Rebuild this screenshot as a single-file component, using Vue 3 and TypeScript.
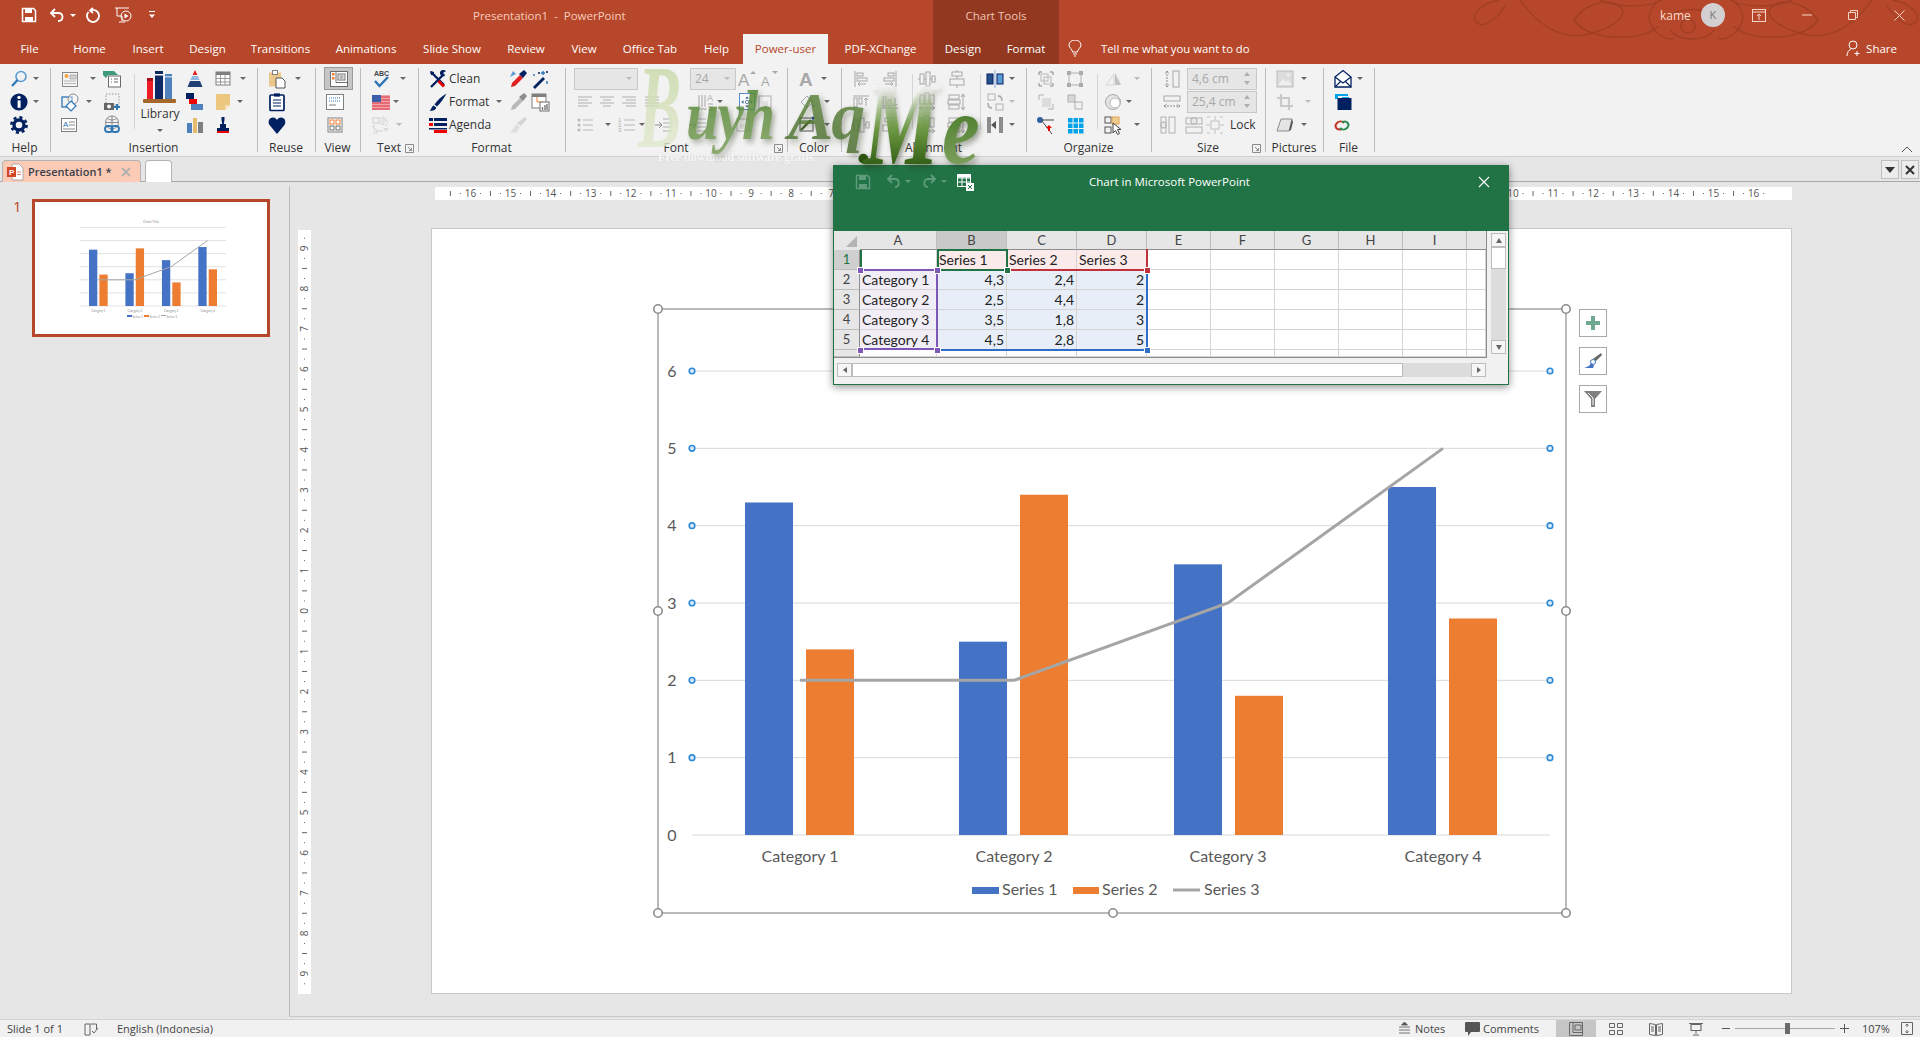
<script setup lang="ts">
interface Cell {
  x: number
  i?: string
  caret?: number
  text?: string
  box?: number
  val?: string
  cls?: string
  spin?: boolean
}
interface Part {
  w: number
  rows?: Cell[][]
  kind?: 'sep' | 'library'
}
interface Group {
  label: string
  w: number
  launcher?: boolean
  parts: Part[]
}

const navy = '#002060'
const lines = (c: string, ys: number[], x1 = 3, x2 = 17) =>
  ys.map((y) => `<path d="M${x1} ${y}H${x2}" stroke="${c}" stroke-width="1"/>`).join('')

// ribbon glyphs, 20x20 box
const icons: Record<string, string> = {
  search: '<circle cx="12" cy="7.5" r="5" fill="none" stroke="#5b9bd5" stroke-width="1.6"/><path d="M8.5 11 3 17" stroke="#2e75b6" stroke-width="2.2"/>',
  info: `<circle cx="10" cy="10" r="8.6" fill="${navy}"/><rect x="8.6" y="8.4" width="3" height="7.4" fill="#fff"/><circle cx="10" cy="5.4" r="1.7" fill="#fff"/>`,
  gear: `<circle cx="10" cy="10" r="5" fill="none" stroke="${navy}" stroke-width="3.4"/><circle cx="10" cy="10" r="7.6" fill="none" stroke="${navy}" stroke-width="2.6" stroke-dasharray="3 3"/>`,
  slideNote: '<rect x="2.5" y="3.5" width="15" height="14" fill="#f4f4f4" stroke="#8a8a8a"/><circle cx="6.5" cy="7" r="2" fill="#f2a53a"/><path d="M10 6h6v4h-6zM4 12h12M4 14.5h12" fill="#d0d0d0" stroke="#a8a8a8" stroke-width=".8"/>',
  sheetGreen: '<path d="M1 2h11l4 4H6l-2 3-3-3z" fill="#3f9a7b"/><rect x="6.5" y="7" width="12" height="11" fill="#fff" stroke="#6a6a6a"/><path d="M9 10h1M12 10h4M9 13h1M12 13h4" stroke="#6a6a6a"/>',
  shapes: '<rect x="2" y="5" width="10" height="10" fill="none" stroke="#2e75b6" stroke-width="1.3"/><circle cx="13" cy="7" r="5" fill="#fff" fill-opacity=".4" stroke="#8a8a8a"/><path d="M11 9l5 5-5 5-5-5z" fill="#fff" stroke="#2e75b6" stroke-width="1.2"/>',
  camera: '<rect x="4" y="2" width="13" height="11" fill="none" stroke="#9a9a9a" stroke-dasharray="1.5 1.5"/><rect x="2" y="11" width="10" height="7" fill="#666"/><circle cx="7" cy="14.5" r="2" fill="#fff"/><path d="M15 12v6M12 15h6" stroke="#2e75b6" stroke-width="2"/>',
  textbox: '<rect x="2.5" y="3.5" width="15" height="13" fill="#fff" stroke="#7f7f7f"/><text x="4" y="12" font-size="8" font-family="Liberation Sans" fill="#2e75b6">A</text><path d="M10 7h6M10 10h6M4 14h12" stroke="#8a8a8a"/>',
  globeLink: '<circle cx="10" cy="7.5" r="6.5" fill="none" stroke="#8a8a8a"/><path d="M3.5 7.5h13M10 1v13M5.5 3.5c3 2 6 2 9 0" fill="none" stroke="#8a8a8a"/><rect x="3" y="11" width="7.5" height="6" rx="3" fill="none" stroke="#2e75b6" stroke-width="1.8"/><rect x="9.5" y="11" width="7.5" height="6" rx="3" fill="none" stroke="#2e75b6" stroke-width="1.8"/>',
  pyramid: '<path d="M10 1l2.4 5H7.6z" fill="#e02020"/><path d="M7.2 7h5.6l1.8 4H5.4z" fill="#8fb7e0"/><path d="M5 12h10l2.5 6h-15z" fill="#1f3f77"/>',
  table: '<rect x="3" y="3" width="14" height="13" fill="#fff" stroke="#7f7f7f"/><rect x="3" y="3" width="14" height="3" fill="#7f7f7f"/><path d="M3 9.5h14M3 13h14M7.5 6v10M12 6v10" stroke="#9a9a9a"/>',
  flowblocks: `<rect x="1" y="1" width="8" height="6" fill="${navy}"/><rect x="4" y="7" width="8" height="5" fill="#f00000"/><rect x="6" y="12" width="12" height="6" fill="#4f81bd"/>`,
  note: '<path d="M3 2h14v11l-5 5H3z" fill="#edc77d"/><path d="M12 18v-5h5z" fill="#f8e3b8"/>',
  barchart: '<rect x="2" y="8" width="5" height="10" fill="#4f81bd"/><rect x="8" y="3" width="4" height="15" fill="#e8bc6e"/><rect x="13" y="7" width="5" height="11" fill="#7f7f7f"/>',
  stamp: `<path d="M8.5 2h3v3l-.7 4h2.2v4H7V9h2.2l-.7-4z" fill="${navy}"/><rect x="4" y="13" width="12" height="3" fill="${navy}"/><rect x="4" y="16" width="12" height="2" fill="#f00000"/>`,
  clipboard: '<rect x="2" y="3.5" width="12" height="14" fill="#edc88c"/><rect x="5.5" y="1.5" width="5" height="4" fill="#fff" stroke="#7f7f7f"/><path d="M9 9h6l3 3v7H9z" fill="#fff" stroke="#555"/>',
  notepad: `<rect x="3" y="3" width="14" height="15.5" rx="1" fill="#fff" stroke="${navy}" stroke-width="1.7"/><rect x="7" y="1.4" width="6" height="3.2" fill="${navy}"/>` + lines(navy, [8, 11, 14], 6, 14),
  heart: `<path d="M10 19 2.5 10C.5 7 2 2.5 6 2.5c2 0 3.2 1.2 4 2.6.8-1.4 2-2.6 4-2.6 4 0 5.5 4.5 3.5 7.5z" fill="${navy}"/>`,
  normalView: '<rect x="1.5" y="2.5" width="17" height="15" fill="#fff" stroke="#6f6f6f"/><path d="M7 2.5v11h11.5" fill="none" stroke="#6f6f6f"/><rect x="3" y="4" width="2.5" height="2.5" fill="#ed7d31"/><rect x="3" y="8" width="2.5" height="2.5" fill="#ed7d31"/><rect x="9" y="5" width="7" height="6" fill="none" stroke="#6f6f6f"/><path d="M10.5 7h4M10.5 9h4" stroke="#6f6f6f"/>',
  dottedView: '<rect x="1.5" y="2.5" width="17" height="15" fill="#fff" stroke="#7f7f7f"/><path d="M4 6h12M4 9h12" stroke="#2e75b6" stroke-dasharray="1 1"/><path d="M4 13h7" stroke="#7f7f7f"/>',
  gridView: '<rect x="3" y="3" width="14" height="14" fill="#fff" stroke="#7f7f7f"/><rect x="5" y="5" width="4" height="4" fill="none" stroke="#ed7d31"/><rect x="11" y="5" width="4" height="4" fill="none" stroke="#ed7d31"/><rect x="5" y="11" width="4" height="4" fill="none" stroke="#6f6f6f"/><rect x="11" y="11" width="4" height="4" fill="none" stroke="#6f6f6f"/>',
  abc: '<text x="3" y="6.5" font-size="7" font-weight="700" font-family="Liberation Sans" fill="#444">ABC</text><path d="M4 12l4.5 5L17 8" fill="none" stroke="#2e75b6" stroke-width="2.5"/>',
  flag: '<rect x="1" y="3" width="18" height="15" fill="#f4a3a8"/><path d="M1 5h18M1 8h18M1 11h18M1 14h18M1 17h18" stroke="#e05a63" stroke-width="1.3"/><rect x="1" y="3" width="9" height="7" fill="#3b5fa8"/>',
  translate: '<path d="M2 3h6v5H2zM4 10l-2 2 2 2M6 16h6" fill="none" stroke="#c8c8c8" stroke-width="1.5"/><text x="8" y="10" font-size="10" font-family="Noto Sans CJK JP" fill="#c0c0c0">あ</text><text x="2" y="19" font-size="9" font-family="Liberation Sans" fill="#c0c0c0">a</text><path d="M12 13h6l-3 4z" fill="#c8c8c8"/>',
  tools: `<path d="M3 18 16 5M3 3l13 13" stroke="${navy}" stroke-width="2.4"/><path d="M2 2l4 1 0 3-3 0zM12 3a4 4 0 0 1 6-1l-3 2 2 3a4 4 0 0 1-5-2z" fill="${navy}"/><path d="M10.5 12 16 17.5" stroke="#e00000" stroke-width="3"/>`,
  brush: `<path d="M18.5 1.5C14 4 9.5 8 6.5 12.5l2.5 2c3.5-3.5 7-8.500 9.500-13z" fill="${navy}"/><path d="M5.5 13.5c-2 1-2 4-4 5 3 .8 6 0 6.8-3z" fill="${navy}"/>`,
  agenda: `<rect x="1" y="3" width="4" height="3" fill="${navy}"/><rect x="6" y="3" width="13" height="3" fill="${navy}"/><rect x="1" y="8" width="4" height="3" fill="#f00000"/><rect x="6" y="8" width="13" height="3" fill="${navy}"/><rect x="1" y="13" width="18" height="1.5" fill="${navy}"/><rect x="6" y="15" width="13" height="3" fill="#f00000"/>`,
  dropper: `<path d="M12 6l3 3-8 8-4 1 1-4z" fill="#e02020"/><path d="M11 5l5-4 3 3-4 5z" fill="${navy}"/><path d="M2 8l3-6 3 3z" fill="#5b9bd5"/>`,
  wand: `<path d="M3 18l10-10 2 2-10 10z" fill="${navy}"/><path d="M13 2v4M11 4h4M4 5v2M17 12v3" stroke="#2e75b6" stroke-width="1.4"/><path d="M8 4h2M16 3h2" stroke="${navy}" stroke-width="1.4"/>`,
  dropperOff: '<path d="M12 6l3 3-8 8-4 1 1-4z" fill="#b8b8b8"/><path d="M11 5l5-4 3 3-4 5z" fill="#8c8c8c"/>',
  tableChart: '<rect x="2" y="2" width="14" height="14" fill="#fff" stroke="#7f7f7f"/><rect x="2" y="2" width="14" height="3" fill="#7f7f7f"/><path d="M7 5v5h6" fill="none" stroke="#ed7d31"/><rect x="10" y="10" width="9" height="9" fill="#fff" stroke="#6f6f6f"/><path d="M12.5 18v-3M15 18v-5M17 18v-6" stroke="#6f6f6f" stroke-width="1.3"/>',
  brushOff: '<path d="M17 2l2 2-6 7-4-3z" fill="#d4d4d4"/><path d="M8 9l4 3-3 5c-2 1-5 1-7 0 2-1 4-4 6-8z" fill="#dedede"/>',
  growA: '<text x="1" y="17" font-size="17" font-family="Liberation Sans" fill="#a8a8a8">A</text><path d="M13 5l3-3 3 3z" fill="#a8a8a8"/>',
  shrinkA: '<text x="2" y="17" font-size="13" font-family="Liberation Sans" fill="#a8a8a8">A</text><path d="M13 2l3 3 3-3z" fill="#a8a8a8"/>',
  alignLeft: lines('#b0b0b0', [5, 8, 11, 14], 3, 17).replace('M3 8H17', 'M3 8H13').replace('M3 14H17', 'M3 14H13'),
  alignMid: lines('#b0b0b0', [5, 8, 11, 14], 3, 17).replace('M3 8H17', 'M6 8H14').replace('M3 14H17', 'M6 14H14'),
  alignRight: lines('#b0b0b0', [5, 8, 11, 14], 3, 17).replace('M3 8H17', 'M7 8H17').replace('M3 14H17', 'M7 14H17'),
  alignFull: lines('#b0b0b0', [5, 8, 11, 14], 3, 17),
  bullets: '<circle cx="4" cy="5" r="1.5" fill="#b8b8b8"/><circle cx="4" cy="10" r="1.5" fill="#b8b8b8"/><circle cx="4" cy="15" r="1.5" fill="#b8b8b8"/>' + lines('#b8b8b8', [5, 10, 15], 8, 18),
  numbers: '<text x="1" y="7" font-size="6" fill="#b0b0b0" font-family="Liberation Sans">1</text><text x="1" y="12" font-size="6" fill="#b0b0b0" font-family="Liberation Sans">2</text><text x="1" y="17" font-size="6" fill="#b0b0b0" font-family="Liberation Sans">3</text>' + lines('#b8b8b8', [5, 10, 15], 7, 18),
  indent: '<path d="M2 10h6M6 7l3 3-3 3" fill="none" stroke="#8c8c8c"/>' + lines('#b0b0b0', [4, 8, 12, 16], 10, 19),
  textDir: '<path d="M4 3v12M7 3v12M10 3v12" stroke="#a8a8a8"/><path d="M2.5 16l1.5 2 1.5-2M5.5 16l1.5 2 1.5-2M8.5 16l1.5 2 1.5-2" fill="none" stroke="#a8a8a8"/><text x="12" y="9" font-size="9" font-family="Liberation Sans" fill="#a8a8a8">A</text><path d="M13 12h5M13 15h5M13 18h5" stroke="#a8a8a8"/>',
  moveHandles: '<path d="M10 2l2.5 3h-5zM10 18l-2.5-3h5zM2 10l3-2.5v5zM18 10l-3 2.5v-5z" fill="#24508c"/><circle cx="10" cy="10" r="2.5" fill="none" stroke="#24508c"/>',
  smallBox: '<rect x="4" y="4" width="12" height="12" fill="none" stroke="#b0b0b0"/><path d="M7 9h6v5H7z" fill="#e0e0e0"/>',
  bigA: '<text x="2" y="17" font-size="19" font-family="Liberation Sans" font-weight="700" fill="#a8a8a8">A</text>',
  fill: '<path d="M4 10l6-6 6 6-6 6z" fill="#f2f2f2" stroke="#a8a8a8"/><path d="M16 11c1 2 2 3 1 5-2 0-2-3-1-5z" fill="#a8a8a8"/>',
  lineColor: '<rect x="3" y="3" width="13" height="13" fill="none" stroke="#555"/><path d="M4 15 14 5" stroke="#4d6b2c" stroke-width="2.4"/><circle cx="16" cy="3" r="1.5" fill="#24508c"/>',
  alignEdgeL: '<path d="M4 2v16" stroke="#a8a8a8"/><rect x="6" y="4" width="6" height="3" fill="none" stroke="#a8a8a8"/><rect x="6" y="9" width="10" height="3" fill="none" stroke="#a8a8a8"/><path d="M7 15h8M7 15l2-2M7 15l2 2" fill="none" stroke="#a8a8a8"/>',
  alignEdgeR: '<path d="M16 2v16" stroke="#a8a8a8"/><rect x="8" y="4" width="6" height="3" fill="none" stroke="#a8a8a8"/><rect x="4" y="9" width="10" height="3" fill="none" stroke="#a8a8a8"/><path d="M13 15H5M13 15l-2-2M13 15l-2 2" fill="none" stroke="#a8a8a8"/>',
  alignTop: '<path d="M2 4h16" stroke="#a8a8a8"/><rect x="3" y="6" width="3" height="9" fill="none" stroke="#a8a8a8"/><rect x="8" y="6" width="3" height="6" fill="none" stroke="#a8a8a8"/><path d="M15 14V6M15 6l-2 2M15 6l2 2" fill="none" stroke="#a8a8a8"/>',
  alignBottom: '<path d="M2 16h16" stroke="#a8a8a8"/><rect x="3" y="5" width="3" height="9" fill="none" stroke="#a8a8a8"/><rect x="8" y="8" width="3" height="6" fill="none" stroke="#a8a8a8"/><path d="M15 6v8M15 14l-2-2M15 14l2-2" fill="none" stroke="#a8a8a8"/>',
  alignMiddleH: '<path d="M1 10h18" stroke="#a8a8a8"/><rect x="3" y="5" width="4" height="10" fill="#f2f2f2" stroke="#a8a8a8"/><rect x="9" y="3" width="4" height="14" fill="#f2f2f2" stroke="#a8a8a8"/><rect x="15" y="7" width="3" height="6" fill="#f2f2f2" stroke="#a8a8a8"/>',
  alignMiddleV: '<path d="M10 1v18" stroke="#a8a8a8"/><rect x="5" y="3" width="10" height="4" fill="#f2f2f2" stroke="#a8a8a8"/><rect x="3" y="10" width="14" height="6" fill="#f2f2f2" stroke="#a8a8a8"/>',
  spreadH: '<rect x="3" y="3" width="4" height="9" fill="none" stroke="#a8a8a8"/><rect x="8" y="1" width="4" height="11" fill="none" stroke="#a8a8a8"/><rect x="13" y="3" width="4" height="9" fill="none" stroke="#a8a8a8"/><path d="M2 16h16M2 16l3-2M2 16l3 2M18 16l-3-2M18 16l-3 2" fill="none" stroke="#a8a8a8"/>',
  spreadV: '<rect x="2" y="3" width="10" height="4" fill="none" stroke="#a8a8a8"/><rect x="1" y="8" width="12" height="4" fill="none" stroke="#a8a8a8"/><rect x="2" y="13" width="10" height="4" fill="none" stroke="#a8a8a8"/><path d="M16 2v16M16 2l-2 3M16 2l2 3M16 18l-2-3M16 18l2-3" fill="none" stroke="#a8a8a8"/>',
  alignBlue: '<path d="M10 1v18" stroke="#8db3e2"/><rect x="2" y="5" width="6" height="10" fill="#24508c" stroke="#002060"/><rect x="12" y="5" width="6" height="10" fill="#5b9bd5" stroke="#002060"/>',
  rotate: '<rect x="3" y="2" width="7" height="6" fill="none" stroke="#7f7f7f"/><rect x="11" y="12" width="7" height="6" fill="none" stroke="#7f7f7f"/><path d="M13 4c3 0 4 2 4 5M7 16c-3 0-4-2-4-5" fill="none" stroke="#7f7f7f" stroke-width="1.8"/>',
  distribute: '<rect x="2" y="2" width="4" height="16" fill="#8c8c8c"/><rect x="14" y="2" width="4" height="16" fill="#8c8c8c"/><path d="M6 10l5-4v8z" fill="#555"/>',
  group: '<path d="M3 3h3M14 3h3M3 17h3M14 17h3M3 3v3M17 3v3M3 14v3M17 14v3" stroke="#a8a8a8" stroke-width="1.5"/><rect x="5" y="5" width="7" height="7" fill="none" stroke="#b8b8b8"/><rect x="8" y="8" width="7" height="7" fill="none" stroke="#b8b8b8"/>',
  ungroup: '<rect x="2" y="2" width="4" height="4" fill="#a8a8a8"/><rect x="14" y="2" width="4" height="4" fill="#a8a8a8"/><rect x="2" y="14" width="4" height="4" fill="#a8a8a8"/><rect x="14" y="14" width="4" height="4" fill="#a8a8a8"/><rect x="4" y="4" width="12" height="12" fill="none" stroke="#b0b0b0"/>',
  front: '<path d="M3 8V3h5M17 12v5h-5" fill="none" stroke="#b0b0b0"/><rect x="6" y="6" width="9" height="9" fill="#dcdcdc"/>',
  back: '<rect x="3" y="3" width="7" height="7" fill="#d8d8d8" stroke="#b0b0b0"/><rect x="10" y="10" width="7" height="7" fill="none" stroke="#b0b0b0"/>',
  flip: '<path d="M3 16 11 5v11z" fill="none" stroke="#bcbcbc"/><path d="M12 4l6 12h-6z" fill="#9c9c9c"/>',
  circles: '<circle cx="10" cy="10" r="7.5" fill="#e4e4e4" stroke="#a8a8a8"/><circle cx="12" cy="11" r="5" fill="#fff" stroke="#b8b8b8"/>',
  needle: '<circle cx="4" cy="5" r="3" fill="#30609f"/><path d="M6 5h12M6 6l10 13" stroke="#444"/><path d="M13 10l-3 3h2v3h2v-3h2z" fill="#f00000"/>',
  dots: [3, 8.5, 14].flatMap((x) => [3, 8.5, 14].map((y) => `<rect x="${x}" y="${y}" width="4.5" height="4.5" fill="#00a2e8"/>`)).join(''),
  selectShape: '<rect x="2" y="2" width="6" height="6" fill="none" stroke="#555"/><rect x="2" y="12" width="6" height="6" fill="none" stroke="#555"/><rect x="9" y="2" width="7" height="7" fill="#f0cb90" stroke="#e0a850"/><path d="M10 8v10l2.5-2.5 2 4 2-1-2-4h3.5z" fill="#fff" stroke="#444"/>',
  heightIc: '<rect x="11" y="2" width="6" height="16" fill="none" stroke="#a8a8a8"/><path d="M5 2v16M5 2 3 5M5 2l2 3M5 18l-2-3M5 18l2-3" fill="none" stroke="#8c8c8c" stroke-dasharray="2 1"/>',
  widthIc: '<rect x="2" y="4" width="16" height="5" fill="none" stroke="#a8a8a8"/><path d="M2 14h16M2 14l3-2M2 14l3 2M18 14l-3-2M18 14l-3 2" fill="none" stroke="#8c8c8c" stroke-dasharray="2 1"/>',
  sizeA: '<rect x="3" y="2" width="5" height="16" fill="none" stroke="#b0b0b0"/><rect x="11" y="2" width="6" height="16" fill="none" stroke="#b0b0b0"/><rect x="3" y="7" width="5" height="6" rx="2" fill="#e8e8e8" stroke="#a8a8a8"/>',
  sizeB: '<rect x="2" y="3" width="16" height="6" fill="none" stroke="#b0b0b0"/><rect x="2" y="12" width="16" height="6" fill="none" stroke="#b0b0b0"/><rect x="7" y="3" width="6" height="6" rx="2" fill="#e8e8e8" stroke="#a8a8a8"/>',
  sizeC: '<rect x="6" y="6" width="8" height="8" fill="none" stroke="#c0c0c0"/><path d="M10 1v4M10 15v4M1 10h4M15 10h4" stroke="#c0c0c0"/><path d="M2 2h3M15 2h3M2 18h3M15 18h3" stroke="#c0c0c0"/>',
  image: '<rect x="2" y="2" width="16" height="16" fill="#dcdcdc" stroke="#bcbcbc"/><path d="M3 16l5-6 3 3 2-2 4 5z" fill="#f0f0f0"/><circle cx="13" cy="6" r="1.5" fill="#f0f0f0"/>',
  crop: '<path d="M6 2v12h12M2 6h12v12" fill="none" stroke="#a8a8a8" stroke-width="2.2"/>',
  eraser: '<path d="M6 4h11l-3 12H2z" fill="#e4e4e4" stroke="#8c8c8c"/><path d="M14 16l3-12 1 3-2 8z" fill="#555"/>',
  mail: `<path d="M2 8 10 1.5 18 8v10H2z" fill="#fff" stroke="${navy}" stroke-width="1.3"/><path d="M2 8l8 6 8-6M2 18l6-6M18 18l-6-6" fill="none" stroke="${navy}" stroke-width="1.1"/>`,
  folder: `<path d="M2 2h13v2H5v3H2z" fill="#00a2e8"/><rect x="4.5" y="6" width="14" height="12" fill="${navy}"/><path d="M9 5h7v1H9z" fill="#00a2e8"/>`,
  chain: '<path d="M9 14c-6 2-8-3-5-6 2-2 5-2 7 0" fill="none" stroke="#c0392b" stroke-width="2"/><path d="M9 7c6-2 8 3 5 6-2 2-5 2-7 0" fill="none" stroke="#2e8b57" stroke-width="2"/>',
}

const groupsRaw: Group[] = [
  { label: 'Help', w: 51, parts: [{ w: 50, rows: [
    [{ x: 19, i: 'search', caret: 36 }],
    [{ x: 19, i: 'info', caret: 36 }],
    [{ x: 19, i: 'gear' }],
  ] }] },
  { label: 'Insertion', w: 207, parts: [
    { w: 83, rows: [
      [{ x: 70, i: 'slideNote', caret: 93 }, { x: 112, i: 'sheetGreen' }],
      [{ x: 70, i: 'shapes', caret: 89 }, { x: 112, i: 'camera' }],
      [{ x: 69, i: 'textbox' }, { x: 112, i: 'globeLink' }],
    ] },
    { w: 1, kind: 'sep' },
    { w: 50, kind: 'library' },
    { w: 72, rows: [
      [{ x: 192, i: 'pyramid' }, { x: 220, i: 'table', caret: 240 }],
      [{ x: 192, i: 'flowblocks' }, { x: 220, i: 'note', caret: 237 }],
      [{ x: 192, i: 'barchart' }, { x: 220, i: 'stamp' }],
    ] },
  ] },
  { label: 'Reuse', w: 58, parts: [{ w: 57, rows: [
    [{ x: 277, i: 'clipboard', caret: 298 }],
    [{ x: 277, i: 'notepad' }],
    [{ x: 277, i: 'heart' }],
  ] }] },
  { label: 'View', w: 45, parts: [{ w: 44, rows: [
    [{ x: 324, box: 29, i: 'normalView', cls: 'active' }],
    [{ x: 335, i: 'dottedView' }],
    [{ x: 335, i: 'gridView' }],
  ] }] },
  { label: 'Text', w: 58, launcher: true, parts: [{ w: 57, rows: [
    [{ x: 381, i: 'abc', caret: 403 }],
    [{ x: 381, i: 'flag', caret: 396 }],
    [{ x: 381, i: 'translate', caret: 399, cls: 'off' }],
  ] }] },
  { label: 'Format', w: 147, parts: [{ w: 146, rows: [
    [{ x: 438, i: 'tools', text: 'Clean' }, { x: 518, i: 'dropper' }, { x: 540, i: 'wand' }],
    [{ x: 438, i: 'brush', text: 'Format', caret: 499 }, { x: 518, i: 'dropperOff' }, { x: 540, i: 'tableChart' }],
    [{ x: 438, i: 'agenda', text: 'Agenda' }, { x: 518, i: 'brushOff' }],
  ] }] },
  { label: 'Font', w: 222, launcher: true, parts: [{ w: 221, rows: [
    [{ x: 574, box: 64, cls: 'combo', val: '', caret: 1 }, { x: 690, box: 46, cls: 'combo', val: '24', caret: 1 }, { x: 747, i: 'growA' }, { x: 769, i: 'shrinkA' }],
    [{ x: 585, i: 'alignLeft' }, { x: 607, i: 'alignMid' }, { x: 629, i: 'alignRight' }, { x: 652, i: 'alignFull' }, { x: 705, i: 'textDir', caret: 720 }, { x: 739, box: 16, i: 'moveHandles', cls: 'sel' }, { x: 765, i: 'smallBox' }],
    [{ x: 585, i: 'bullets', caret: 608 }, { x: 627, i: 'numbers', caret: 642 }, { x: 663, i: 'indent' }, { x: 697, i: 'indent' }, { x: 743, i: 'smallBox' }],
  ] }] },
  { label: 'Color', w: 54, parts: [{ w: 53, rows: [
    [{ x: 807, i: 'bigA', caret: 824 }],
    [{ x: 807, i: 'fill', caret: 827 }],
    [{ x: 807, i: 'lineColor', caret: 827 }],
  ] }] },
  { label: 'Alignment', w: 185, parts: [
    { w: 70, rows: [
      [{ x: 861, i: 'alignEdgeL' }, { x: 890, i: 'alignEdgeR' }],
      [{ x: 861, i: 'alignTop' }, { x: 890, i: 'alignBottom' }],
      [{ x: 861, i: 'alignMiddleH' }, { x: 890, i: 'alignMiddleV' }],
    ] },
    { w: 1, kind: 'sep' },
    { w: 67, rows: [
      [{ x: 927, i: 'alignMiddleH' }, { x: 957, i: 'alignMiddleV' }],
      [{ x: 927, i: 'spreadH' }, { x: 957, i: 'spreadV' }],
      [{ x: 927, i: 'spreadH' }, { x: 957, i: 'spreadV' }],
    ] },
    { w: 1, kind: 'sep' },
    { w: 45, rows: [
      [{ x: 995, i: 'alignBlue', caret: 1012 }],
      [{ x: 995, i: 'rotate', caret: 1012, cls: 'off' }],
      [{ x: 995, i: 'distribute', caret: 1012 }],
    ] },
  ] },
  { label: 'Organize', w: 125, parts: [
    { w: 70, rows: [
      [{ x: 1046, i: 'group' }, { x: 1075, i: 'ungroup' }],
      [{ x: 1046, i: 'front' }, { x: 1075, i: 'back' }],
      [{ x: 1046, i: 'needle' }, { x: 1075, i: 'dots' }],
    ] },
    { w: 1, kind: 'sep' },
    { w: 53, rows: [
      [{ x: 1113, i: 'flip', caret: 1137, cls: 'off' }],
      [{ x: 1113, i: 'circles', caret: 1129 }],
      [{ x: 1113, i: 'selectShape', caret: 1137 }],
    ] },
  ] },
  { label: 'Size', w: 114, launcher: true, parts: [{ w: 113, rows: [
    [{ x: 1172, i: 'heightIc' }, { x: 1187, box: 70, cls: 'combo', val: '4,6 cm', spin: true }],
    [{ x: 1172, i: 'widthIc' }, { x: 1187, box: 70, cls: 'combo', val: '25,4 cm', spin: true }],
    [{ x: 1168, i: 'sizeA' }, { x: 1194, i: 'sizeB' }, { x: 1215, i: 'sizeC' }, { x: 1229, text: 'Lock' }],
  ] }] },
  { label: 'Pictures', w: 58, parts: [{ w: 57, rows: [
    [{ x: 1285, i: 'image', caret: 1304 }],
    [{ x: 1285, i: 'crop', caret: 1308, cls: 'off' }],
    [{ x: 1285, i: 'eraser', caret: 1304 }],
  ] }] },
  { label: 'File', w: 51, parts: [{ w: 50, rows: [
    [{ x: 1343, i: 'mail', caret: 1360 }],
    [{ x: 1343, i: 'folder' }],
    [{ x: 1343, i: 'chain' }],
  ] }] },
]

// turn the icon-centre x values into widths so each row stays in normal flow
function layoutRow(start: number, cells: Cell[]) {
  const lefts = cells.map((c) => (c.box ? c.x : c.i ? c.x - 10 : c.x))
  return {
    pad: lefts[0] - start,
    cells: cells.map((c, n) => {
      const left = lefts[n]
      const next = n < cells.length - 1 ? lefts[n + 1] : undefined
      const width = c.box ?? (next !== undefined ? next - left : undefined)
      const iconEnd = c.i ? c.x + 10 : c.x
      const hasCaret = !!c.caret && !c.box
      return {
        ...c,
        width,
        after: c.box && next !== undefined ? next - left - c.box : 0,
        textW: c.text ? (c.caret ? c.caret - 4 - iconEnd : undefined) : undefined,
        caretGap: hasCaret && !c.text ? c.caret! - 3 - iconEnd : 0,
      }
    }),
  }
}

let cursor = 0
const groups = groupsRaw.map((g) => {
  let at = cursor
  cursor += g.w
  return {
    ...g,
    parts: g.parts.map((p) => {
      const start = at
      at += p.w
      return { ...p, rows: p.rows?.map((r) => layoutRow(start, r)) }
    }),
  }
})

const tabs = [
  { name: 'File', w: 59 }, { name: 'Home', w: 61 }, { name: 'Insert', w: 56 }, { name: 'Design', w: 63 },
  { name: 'Transitions', w: 83 }, { name: 'Animations', w: 88 }, { name: 'Slide Show', w: 84 }, { name: 'Review', w: 64 },
  { name: 'View', w: 52 }, { name: 'Office Tab', w: 80 }, { name: 'Help', w: 53 }, { name: 'Power-user', w: 85, on: true },
  { name: 'PDF-XChange', w: 105 },
]

// chart data
const y = (v: number) => 835 - v * 77.33
const cats = [
  { name: 'Category 1', cx: 800, bx: 745, ox: 806, a: 4.3, b: 2.4, c: 2 },
  { name: 'Category 2', cx: 1014, bx: 959, ox: 1020, a: 2.5, b: 4.4, c: 2 },
  { name: 'Category 3', cx: 1228, bx: 1174, ox: 1235, a: 3.5, b: 1.8, c: 3 },
  { name: 'Category 4', cx: 1443, bx: 1388, ox: 1449, a: 4.5, b: 2.8, c: 5 },
]
const linePts = cats.map((c) => `${c.cx},${y(c.c)}`).join(' ')
const vals = [0, 1, 2, 3, 4, 5, 6]
const handles = [[658, 309], [1113, 309], [1566, 309], [658, 611], [1566, 611], [658, 913], [1113, 913], [1566, 913]]

// thumbnail maps the same chart to 146px wide
const mx = (x: number) => 80 + (x - 692) * 0.17
const my = (v: number) => 306 - v * 13.1
const miniLine = cats.map((c) => `${mx(c.cx)},${my(c.c)}`).join(' ')

// rulers
const rulerNums = Array.from({ length: 33 }, (_, n) => ({ n: Math.abs(n - 16), p: (n - 16) * 40.1 }))
const rulerTicks = Array.from({ length: 132 }, (_, n) => ({ p: (n - 66) * 10.025, half: (n - 66) % 4 !== 0 && (n - 66) % 2 === 0, whole: (n - 66) % 4 === 0 })).filter((t) => !t.whole)
const vNums = Array.from({ length: 19 }, (_, n) => ({ n: Math.abs(n - 9), p: (n - 9) * 40.3 }))
const vTicks = Array.from({ length: 75 }, (_, n) => ({ p: (n - 37) * 10.075, half: (n - 37) % 4 !== 0 && (n - 37) % 2 === 0, whole: (n - 37) % 4 === 0 })).filter((t) => !t.whole)

// sheet
const colHeads = ['A', 'B', 'C', 'D', 'E', 'F', 'G', 'H', 'I']
const sheetRows = [
  ['', 'Series 1', 'Series 2', 'Series 3'],
  ['Category 1', '4,3', '2,4', '2'],
  ['Category 2', '2,5', '4,4', '2'],
  ['Category 3', '3,5', '1,8', '3'],
  ['Category 4', '4,5', '2,8', '5'],
  ['', '', '', ''],
]
function cellCls(r: number, c: number) {
  if (r === 0 && c > 0 && c < 4) return 'pink'
  if (r > 0 && r < 5 && c === 0) return 'lav'
  if (r > 0 && r < 5 && c > 0 && c < 4) return 'blue num'
  return ''
}
</script>

<template>
  <div class="app">
    <header class="titlebar">
      <svg class="swirl" width="460" height="46" viewBox="1460 0 460 46">
        <g fill="none" stroke="#a03f24" stroke-width="1.4">
          <path d="M1500 0c-16 2-30 14-24 22 8 8 22-4 30-18" />
          <path d="M1520 0c14 20 38 42 70 34 28-8 42-22 26-30-14-6-32 2-42 16 16 24 74 20 84 6" />
          <path d="M1660 0c-20 14-8 32 2 36 4 3 8 4 12 2" />
          <path d="M1600 0c18 8 48 8 62 0" />
          <path d="M1892 0c16 2 30 14 24 22-8 8-22-4-30-18" />
          <path d="M1872 0c-14 20-38 42-70 34-28-8-42-22-26-30 14-6 32 2 42 16-16 24-74 20-84 6" />
          <path d="M1732 0c20 14 8 32-2 36-4 3-8 4-12 2" />
          <path d="M1792 0c-18 8-48 8-62 0" />
          <circle cx="1688" cy="26" r="7" />
          <path d="M1670 30c8 12 36 12 44 0M1672 14c8-6 34-6 42 0" />
        </g>
      </svg>
      <div class="title-row">
        <div class="qat">
          <svg class="q-save" width="16" height="16" viewBox="0 0 16 16"><path d="M1.5 1.5h11l2 2v11h-13z" fill="none" stroke="#fff" stroke-width="1.5"/><rect x="4" y="2" width="7" height="4" fill="#fff"/><rect x="4" y="10" width="8" height="4" fill="#fff"/></svg>
          <svg class="q-undo" width="16" height="16" viewBox="0 0 16 16"><path d="M6 2 2 6l4 4M2 6h7c6 0 6 8 0 8" fill="none" stroke="#fff" stroke-width="1.8"/></svg>
          <i class="caret white q-c1"></i>
          <svg class="q-redo" width="16" height="16" viewBox="0 0 16 16"><path d="M8 1l-3 2.5L8 6M5.5 3.5a6 6 0 1 1-2 1.5" fill="none" stroke="#fff" stroke-width="1.8"/></svg>
          <svg class="q-show" width="20" height="18" viewBox="0 0 20 18"><path d="M1 2h14M3 2v8h5M8 10v5M5 16h6" fill="none" stroke="#fff"/><circle cx="12" cy="10" r="5" fill="none" stroke="#fff"/><path d="M10.5 7.5l4 2.5-4 2.5z" fill="#fff"/></svg>
          <svg class="q-more" width="8" height="10" viewBox="0 0 8 10"><path d="M1 1.5h6" stroke="#fff"/><path d="M1 4.5h6L4 8z" fill="#fff"/></svg>
        </div>
        <div class="doc-title">Presentation1&nbsp; -&nbsp; PowerPoint</div>
        <div class="ctx-head">Chart Tools</div>
        <div class="account">
          <span class="user">kame</span>
          <span class="avatar">K</span>
          <svg class="win w-ribbon" width="14" height="13" viewBox="0 0 14 13"><rect x=".5" y=".5" width="13" height="12" fill="none" stroke="#f5d5c8"/><path d="M.5 3h13M7 11V5M5 7l2-2 2 2" fill="none" stroke="#f5d5c8"/></svg>
          <svg class="win w-min" width="10" height="10" viewBox="0 0 10 10"><path d="M0 5h10" stroke="#f5d5c8"/></svg>
          <svg class="win w-max" width="10" height="10" viewBox="0 0 10 10"><path d="M.5 2.5h7v7h-7zM2.5 2.5v-2h7v7h-2" fill="none" stroke="#f5d5c8"/></svg>
          <svg class="win w-close" width="11" height="11" viewBox="0 0 11 11"><path d="M.5.5l10 10M10.5.5l-10 10" stroke="#f5d5c8"/></svg>
        </div>
      </div>
      <nav class="tab-row">
        <span v-for="t in tabs" :key="t.name" class="rtab" :class="{ on: t.on }" :style="{ width: t.w + 'px' }">{{ t.name }}</span>
        <div class="ctx-tabs">
          <span class="rtab ctx-a">Design</span>
          <span class="rtab ctx-b">Format</span>
        </div>
        <svg class="bulb" width="14" height="17" viewBox="0 0 14 17"><path d="M4.5 12c0-3-3.5-4-3.5-7a6 5 0 0 1 12 0c0 3-3.5 4-3.5 7zM5 14h4M6 16h2" fill="none" stroke="#fff"/></svg>
        <span class="tell">Tell me what you want to do</span>
        <span class="share">
          <svg width="16" height="17" viewBox="0 0 16 17"><circle cx="7" cy="5" r="4" fill="none" stroke="#fff"/><path d="M1 16c0-4 2-6 4-7M11 11v5M8.5 13.5h5" fill="none" stroke="#fff"/></svg>
          Share
        </span>
      </nav>
    </header>

    <section class="ribbon">
      <div v-for="g in groups" :key="g.label" class="group" :style="{ width: g.w + 'px' }">
        <div class="parts">
          <template v-for="(p, pi) in g.parts" :key="pi">
            <div v-if="p.kind === 'sep'" class="vsep"></div>
            <div v-else-if="p.kind === 'library'" class="library" :style="{ width: p.w + 'px' }">
              <svg width="34" height="34" viewBox="0 0 34 34">
                <rect x="4" y="8" width="6" height="22" fill="#ee1c25"/><rect x="4" y="8" width="6" height="3" fill="#a31218"/>
                <rect x="12" y="1" width="8" height="29" fill="#0e2a64"/><rect x="12" y="4" width="8" height="1.5" fill="#fff"/>
                <rect x="22" y="4" width="7" height="26" fill="#4f81bd"/><rect x="22" y="6" width="7" height="1.5" fill="#b7cfe9"/>
                <rect x="0" y="29" width="33" height="4" rx="1" fill="#a5682a"/>
              </svg>
              <span>Library</span>
              <i class="caret"></i>
            </div>
            <div v-else class="part" :style="{ width: p.w + 'px' }">
              <div v-for="(row, ri) in p.rows" :key="ri" class="row" :style="{ paddingLeft: row.pad + 'px' }">
                <div
                  v-for="(c, ci) in row.cells"
                  :key="ci"
                  class="cell"
                  :class="c.cls"
                  :style="{ width: c.width ? c.width + 'px' : undefined, marginRight: c.after ? c.after + 'px' : undefined }"
                >
                  <svg v-if="c.i" width="20" height="20" viewBox="0 0 20 20" v-html="icons[c.i]"></svg>
                  <span v-if="c.val !== undefined" class="val">{{ c.val }}</span>
                  <span v-if="c.text" class="ctext" :style="{ width: c.textW ? c.textW + 'px' : undefined }">{{ c.text }}</span>
                  <i v-if="c.caret" class="caret" :class="{ end: c.box }" :style="{ marginLeft: c.caretGap ? c.caretGap + 'px' : undefined }"></i>
                  <span v-if="c.spin" class="spin"><i></i><i></i></span>
                </div>
              </div>
            </div>
          </template>
        </div>
        <div class="glabel">{{ g.label }}</div>
        <svg v-if="g.launcher" class="launcher" width="9" height="9" viewBox="0 0 9 9"><path d="M.5 8.5v-8h8v8zM3 3l3.5 3.5M6.5 4v2.5H4" fill="none" stroke="#8c8c8c"/></svg>
      </div>
      <svg class="collapse" width="12" height="7" viewBox="0 0 12 7"><path d="M1 6l5-5 5 5" fill="none" stroke="#555"/></svg>
    </section>

    <div class="docstrip">
      <div class="doctab">
        <svg width="18" height="18" viewBox="0 0 18 18"><path d="M6 1h7l4 4v12H6z" fill="#fff" stroke="#a8a8a8"/><rect x="1" y="4" width="9" height="10" fill="#d24726"/><text x="3" y="12" font-size="8" font-weight="700" font-family="Liberation Sans" fill="#fff">P</text><path d="M11 9h4M11 11.5h4" stroke="#e0846a"/></svg>
        <span class="doctab-name">Presentation1 *</span>
        <svg class="tabx" width="10" height="10" viewBox="0 0 10 10"><path d="M1 1l8 8M9 1 1 9" stroke="#b0b0b0" stroke-width="1.8"/></svg>
      </div>
      <div class="doctab blank"></div>
      <div class="strip-btns">
        <span class="sbtn"><i class="caret dark"></i></span>
        <span class="sbtn"><svg width="10" height="10" viewBox="0 0 10 10"><path d="M1 1l8 8M9 1 1 9" stroke="#333" stroke-width="2"/></svg></span>
      </div>
    </div>

    <main class="workspace">
      <aside class="thumbs">
        <span class="thumb-no">1</span>
        <div class="thumb">
          <svg width="232" height="132" viewBox="35 202 232 132">
            <text x="151" y="223" text-anchor="middle" font-size="3.5" fill="#8c8c8c" font-family="Lato">Chart Title</text>
            <path v-for="v in vals" :key="v" :d="`M80 ${my(v)}H226`" stroke="#e2e2e2" stroke-width="1"/>
            <template v-for="c in cats" :key="c.name">
              <rect :x="mx(c.bx)" :y="my(c.a)" width="8.3" :height="c.a * 13.1" fill="#4472c4"/>
              <rect :x="mx(c.ox)" :y="my(c.b)" width="8.3" :height="c.b * 13.1" fill="#ed7d31"/>
              <text :x="mx(c.cx)" y="312" text-anchor="middle" font-size="3" fill="#8c8c8c" font-family="Lato">{{ c.name }}</text>
            </template>
            <polyline :points="miniLine" fill="none" stroke="#a5a5a5" stroke-width="1"/>
            <rect x="127" y="315" width="5" height="2" fill="#4472c4"/><text x="132.5" y="317.5" font-size="3" fill="#8c8c8c" font-family="Lato">Series 1</text>
            <rect x="144" y="315" width="5" height="2" fill="#ed7d31"/><text x="149.5" y="317.5" font-size="3" fill="#8c8c8c" font-family="Lato">Series 2</text>
            <rect x="161" y="315" width="5" height="1" fill="#a5a5a5"/><text x="166.5" y="317.5" font-size="3" fill="#8c8c8c" font-family="Lato">Series 3</text>
          </svg>
        </div>
      </aside>
      <div class="editor">
        <div class="hruler">
          <svg width="1357" height="13" viewBox="435 0 1357 13">
            <g v-for="t in rulerTicks" :key="t.p" :transform="`translate(${1112 + t.p} 6.5)`">
              <path :d="t.half ? 'M0 -2.5V2.5' : 'M0 -.5V.5'" stroke="#666"/>
            </g>
            <text v-for="t in rulerNums" :key="t.p" :x="1112 + t.p" y="10" text-anchor="middle" font-size="10" fill="#555" font-family="Open Sans">{{ t.n }}</text>
          </svg>
        </div>
        <div class="vruler">
          <svg width="13" height="765" viewBox="0 230 13 765">
            <g v-for="t in vTicks" :key="t.p" :transform="`translate(6.5 ${611 + t.p})`">
              <path :d="t.half ? 'M-2.5 0H2.5' : 'M-.5 0H.5'" stroke="#666"/>
            </g>
            <text v-for="t in vNums" :key="t.p" :transform="`translate(10 ${611 + t.p}) rotate(-90)`" text-anchor="middle" font-size="10" fill="#555" font-family="Open Sans">{{ t.n }}</text>
          </svg>
        </div>
        <div class="slide">
          <svg class="chart" width="908" height="604" viewBox="658 309 908 604">
            <path v-for="v in vals" :key="v" :d="`M692 ${y(v)}H1550`" stroke="#d9d9d9" stroke-width="1"/>
            <text v-for="v in vals" :key="'l' + v" x="672" :y="y(v) + 5.5" class="ct" text-anchor="middle">{{ v }}</text>
            <template v-for="c in cats" :key="c.name">
              <rect :x="c.bx" :y="y(c.a)" width="48" :height="c.a * 77.33" fill="#4472c4"/>
              <rect :x="c.ox" :y="y(c.b)" width="48" :height="c.b * 77.33" fill="#ed7d31"/>
              <text :x="c.cx" y="862" class="ct" text-anchor="middle">{{ c.name }}</text>
            </template>
            <polyline :points="linePts" fill="none" stroke="#a5a5a5" stroke-width="3"/>
            <rect x="972" y="887" width="27" height="7" fill="#4472c4"/><text x="1002" y="895" class="ct">Series 1</text>
            <rect x="1073" y="887" width="26" height="7" fill="#ed7d31"/><text x="1102" y="895" class="ct">Series 2</text>
            <path d="M1173 890h27" stroke="#a5a5a5" stroke-width="3"/><text x="1204" y="895" class="ct">Series 3</text>
            <template v-for="v in vals.slice(1)" :key="'d' + v">
              <circle cx="692" :cy="y(v)" r="2.8" fill="#dceaf7" stroke="#2e8bd8" stroke-width="1.6"/>
              <circle cx="1550" :cy="y(v)" r="2.8" fill="#dceaf7" stroke="#2e8bd8" stroke-width="1.6"/>
            </template>
            <rect x="658" y="309" width="908" height="604" fill="none" stroke="#8c8c8c" stroke-width="1.2"/>
            <circle v-for="(h, n) in handles" :key="n" :cx="h[0]" :cy="h[1]" r="4.2" fill="#fff" stroke="#8c8c8c" stroke-width="1.6"/>
          </svg>
          <div class="chart-btns">
            <span class="cbtn"><svg width="18" height="18" viewBox="0 0 18 18"><path d="M9 2v14M2 9h14" stroke="#6fa88e" stroke-width="4"/></svg></span>
            <span class="cbtn"><svg width="20" height="20" viewBox="0 0 20 20"><path d="M18 2l1 2-6 6-3-2z" fill="#666"/><circle cx="10" cy="11" r="2.5" fill="#fff" stroke="#4472c4"/><path d="M8 12c-1 3-4 4-7 5h9c1-1 1-3 0-4z" fill="#4472c4"/></svg></span>
            <span class="cbtn"><svg width="20" height="20" viewBox="0 0 20 20"><path d="M1 2h18l-7 8v8H8v-8z" fill="#7f7f7f"/><path d="M5 4l5 5v7" fill="none" stroke="#fff"/></svg></span>
          </div>
        </div>
      </div>
    </main>

    <footer class="statusbar">
      <span class="st-slide">Slide 1 of 1</span>
      <svg class="st-spell" width="14" height="14" viewBox="0 0 14 14"><path d="M1 2h5v11H1zM6.5 2h6v5M8 9l2 2 4-5" fill="none" stroke="#666"/></svg>
      <span class="st-lang">English (Indonesia)</span>
      <span class="st-right">
        <svg class="st-notes" width="11" height="13" viewBox="0 0 11 13"><path d="M5.5 0l3 3h-6zM0 5h11M0 8h11M0 11h11" fill="#555" stroke="#555" stroke-width=".8"/></svg>
        <span class="st-t1">Notes</span>
        <svg class="st-com" width="15" height="14" viewBox="0 0 15 14"><path d="M1 0h13a1 1 0 0 1 1 1v8a1 1 0 0 1-1 1H6l-3 4v-4H1a1 1 0 0 1-1-1V1a1 1 0 0 1 1-1z" fill="#555"/></svg>
        <span class="st-t2">Comments</span>
        <span class="st-view on"><svg width="14" height="14" viewBox="0 0 14 14"><path d="M.5.5h13v13H.5zM4 .5v10h9.5M6 3h6v5H6z" fill="none" stroke="#666"/></svg></span>
        <span class="st-view"><svg width="14" height="14" viewBox="0 0 14 14"><path d="M.5 1.5h5v4h-5zM8.5 1.5h5v4h-5zM.5 8.5h5v4h-5zM8.5 8.5h5v4h-5z" fill="none" stroke="#666"/></svg></span>
        <span class="st-view"><svg width="14" height="14" viewBox="0 0 14 14"><path d="M.5 1.5l6 1v11l-6-1zM13.5 1.5l-6 1v11l6-1zM2 5h3M2 7h3M2 9h3M9 5h3M9 7h3M9 9h3" fill="none" stroke="#666"/></svg></span>
        <span class="st-view"><svg width="14" height="14" viewBox="0 0 14 14"><path d="M0 1.5h14M2 2.5h10v6H2zM7 8.5v3M4 13h6" fill="none" stroke="#666" stroke-width="1.1"/></svg></span>
        <span class="zoom-minus"></span>
        <span class="zoom-track"><i></i></span>
        <span class="zoom-plus"></span>
        <span class="st-zoom">107%</span>
        <svg class="st-fit" width="12" height="13" viewBox="0 0 12 13"><path d="M.5.5h11v12H.5zM6 2v3M4.5 3.5L6 2l1.5 1.5M6 11V8M4.5 9.5L6 11l1.5-1.5" fill="none" stroke="#666"/></svg>
      </span>
    </footer>

    <div class="sheet-win">
      <div class="sw-head">
        <svg class="sw-save" width="16" height="16" viewBox="0 0 16 16"><path d="M1.5 1.5h11l2 2v11h-13z" fill="none" stroke="#5f9c7b" stroke-width="1.5"/><rect x="4" y="2" width="7" height="4" fill="#5f9c7b"/><rect x="4" y="10" width="8" height="4" fill="#5f9c7b"/></svg>
        <svg class="sw-undo" width="15" height="14" viewBox="0 0 15 14"><path d="M6 1 2 5l4 4M2 5h7c5 0 5 8 0 8" fill="none" stroke="#5f9c7b" stroke-width="1.8"/></svg>
        <i class="caret sw-c"></i>
        <svg class="sw-redo" width="15" height="14" viewBox="0 0 15 14"><path d="M9 1l4 4-4 4M13 5H6c-5 0-5 8 0 8" fill="none" stroke="#5f9c7b" stroke-width="1.8"/></svg>
        <i class="caret sw-c"></i>
        <svg class="sw-table" width="17" height="17" viewBox="0 0 17 17"><path d="M.5.5h13v12H.5zM.5 4h13M.5 8h13M5 .5v12M9.5.5v12" fill="none" stroke="#fff"/><rect x=".5" y=".5" width="13" height="3" fill="#fff"/><rect x="9" y="9" width="8" height="8" fill="#fff"/><path d="M11 11l4 4M15 11l-4 4" stroke="#217346"/></svg>
        <span class="sw-title">Chart in Microsoft PowerPoint</span>
        <svg class="sw-close" width="12" height="12" viewBox="0 0 12 12"><path d="M1 1l10 10M11 1 1 11" stroke="#fff" stroke-width="1.1"/></svg>
      </div>
      <div class="sw-body">
        <div class="sheet">
          <span class="corner"><i></i></span>
          <span v-for="(h, n) in colHeads" :key="h" class="chead" :class="{ hi: n === 1 }">{{ h }}</span>
          <span class="chead rest"></span>
          <template v-for="(r, ri) in sheetRows" :key="ri">
            <span class="rhead" :class="{ hi: ri === 0 }">{{ ri < 5 ? ri + 1 : '' }}</span>
            <span v-for="(v, ci) in r" :key="ci" class="scell" :class="cellCls(ri, ci)">{{ v }}</span>
            <span v-for="n in 6" :key="'e' + n" class="scell"></span>
          </template>
          <i class="rng purple"></i>
          <i class="rng green"></i>
          <i class="rng red"></i>
          <i class="rng blue"></i>
          <i class="active-a1"></i>
          <b class="dot d-a-top"></b>
          <b class="dot d-b-top"></b>
          <b class="dot d-c-top"></b>
          <b class="dot d-d-top"></b>
          <b class="dot d-a-bot"></b>
          <b class="dot d-b-bot"></b>
          <b class="dot d-d-bot"></b>
        </div>
        <div class="vscroll">
          <span class="sb-btn"><i class="tri up"></i></span>
          <span class="vthumb"></span>
          <span class="vtrack"></span>
          <span class="sb-btn"><i class="tri down"></i></span>
        </div>
      </div>
      <div class="hscroll">
        <span class="sb-btn"><i class="tri left"></i></span>
        <span class="hthumb"></span>
        <span class="htrack"></span>
        <span class="sb-btn"><i class="tri right"></i></span>
      </div>
    </div>

    <div class="watermark">
      <div class="wm-text"><span class="w-b">B</span><span class="w-u">uyh</span><span class="w-a">Aq</span><span class="w-d">.</span><span class="w-m">M</span><span class="w-e">e</span></div>
      <div class="wm-sub">Free download software gratis</div>
    </div>
  </div>
</template>

<style>
html, body { margin: 0; background: #e6e6e6; overflow: hidden; }
</style>

<style scoped>
.app {
  position: relative;
  width: 1920px;
  height: 1037px;
  display: flex;
  flex-direction: column;
  overflow: hidden;
  background: #e6e6e6;
  font-family: "Open Sans", "Noto Sans", sans-serif;
  font-size: 11.5px;
  color: #444;
}

/* title bar */
.titlebar { position: relative; height: 64px; background: #b7472a; color: #fff; flex: none; }
.swirl { position: absolute; left: 1460px; top: 0; }
.title-row { position: relative; display: flex; height: 34px; }
.qat { width: 473px; display: flex; align-items: center; padding-bottom: 2px; box-sizing: border-box; height: 32px; }
.q-save { margin-left: 21px; }
.q-undo { margin-left: 12px; }
.q-c1 { margin-left: 5px; }
.q-redo { margin-left: 9px; }
.q-show { margin-left: 13px; }
.q-more { margin-left: 14px; }
.doc-title { width: 460px; line-height: 32px; color: #f6cdbd; }
.ctx-head { width: 126px; height: 34px; background: #923821; color: #f0c4b2; text-align: center; line-height: 32px; }
.account { flex: 1; display: flex; align-items: center; height: 30px; color: #f8d9cd; }
.user { margin-left: 601px; font-size: 12px; }
.avatar { margin-left: 10px; width: 24px; height: 24px; border-radius: 50%; background: #d2d0d0; color: #777; text-align: center; line-height: 24px; font-size: 11px; }
.win { flex: none; }
.w-ribbon { margin-left: 27px; }
.w-min { margin-left: 36px; }
.w-max { margin-left: 36px; }
.w-close { margin-left: 36px; }
.tab-row { position: relative; display: flex; align-items: stretch; height: 30px; }
.rtab { flex: none; text-align: center; line-height: 30px; }
.rtab.on { background: #f2f2f2; color: #b7472a; }
.ctx-tabs { display: flex; background: #923821; width: 126px; }
.ctx-a { width: 60px; }
.ctx-b { width: 66px; }
.bulb { margin: 6px 0 0 9px; }
.tell { margin-left: 19px; line-height: 30px; font-size: 11.3px; }
.share { margin-left: auto; margin-right: 23px; display: flex; align-items: center; gap: 4px; padding-bottom: 1px; }

/* ribbon */
.ribbon { position: relative; flex: none; height: 93px; box-sizing: border-box; background: #f2f2f2; border-bottom: 1px solid #d0d0d0; display: flex; padding-top: 4px; }
.group { position: relative; height: 84px; box-sizing: border-box; border-right: 1px solid #bdbdbd; flex: none; }
.parts { display: flex; height: 68px; margin-top: -1px; }
.part { flex: none; }
.vsep { flex: none; width: 1px; height: 55px; margin-top: 7px; background: #d4d4d4; }
.row { display: flex; height: 23px; align-items: center; }
.cell { display: flex; align-items: center; flex: none; }
.cell > svg { flex: none; }
.cell.off > svg { opacity: .55; }
.cell.off .caret { border-top-color: #bbb; }
.cell.active { height: 23px; justify-content: center; background: #c6c6c6; box-shadow: inset 0 0 0 1px #9a9a9a; }
.cell.combo { height: 22px; box-sizing: border-box; background: #e6e6e6; border: 1px solid #c8c8c8; color: #a8a8a8; padding: 0 4px; font-size: 12px; }
.cell.sel { height: 17px; justify-content: center; background: #fff; box-shadow: inset 0 0 0 1px #5b8bd0; }
.cell.sel > svg { width: 14px; height: 14px; }
.val { flex: 1; }
.ctext { margin-left: 1px; flex: none; font-size: 12px; color: #333; }
.spin { display: flex; flex-direction: column; gap: 5px; margin-right: 2px; }
.spin i { width: 0; height: 0; border: 3px solid transparent; border-top: 0; border-bottom: 4px solid #b0b0b0; }
.spin i + i { border-bottom: 0; border-top: 4px solid #b0b0b0; }
.caret { display: inline-block; width: 0; height: 0; flex: none; border: 3px solid transparent; border-bottom: 0; border-top: 3.5px solid #666; }
.caret.end { margin-left: auto; margin-right: 1px; border-top-color: #bbb; }
.caret.white { border-top-color: #fff; }
.caret.dark { border: 5px solid transparent; border-bottom: 0; border-top: 6px solid #333; }
.library { flex: none; display: flex; flex-direction: column; align-items: center; box-sizing: border-box; padding-top: 3px; }
.library span { font-size: 12px; color: #333; line-height: 16px; margin-top: 2px; }
.library .caret { margin-top: 7px; }
.glabel { height: 16px; line-height: 26px; text-align: center; color: #333; padding-right: 1px; font-size: 12px; }
.launcher { position: absolute; right: 4px; bottom: -1px; }
.collapse { position: absolute; right: 7px; bottom: 3px; }

/* doc tab strip */
.docstrip { flex: none; height: 25px; box-sizing: border-box; display: flex; align-items: flex-end; padding-left: 2px; gap: 4px; border-bottom: 1px solid #a8a8a8; background: #e6e6e6; position: relative; }
.doctab { width: 139px; height: 22px; box-sizing: border-box; background: #fbcbb5; border: 1px solid #b4b4b4; border-bottom: 0; border-radius: 4px 4px 0 0; display: flex; align-items: center; padding-left: 3px; gap: 4px; margin-bottom: -1px; }
.doctab-name { white-space: nowrap; font-weight: 600; font-size: 11px; color: #3a3f4d; }
.doctab .tabx { margin-left: auto; margin-right: 9px; }
.doctab.blank { width: 27px; background: #fff; }
.strip-btns { position: absolute; right: 1px; top: 3px; display: flex; gap: 2px; }
.sbtn { width: 18px; height: 19px; box-sizing: border-box; background: #ececec; border: 1px solid #c0c0c0; display: flex; align-items: center; justify-content: center; }

/* workspace */
.workspace { flex: 1; display: flex; min-height: 0; }
.thumbs { flex: none; width: 290px; box-sizing: border-box; display: flex; align-items: flex-start; padding: 13px 0 0 13px; border-right: 1px solid #bdbdbd; margin-top: 4px; margin-bottom: 2px; }
.thumb-no { width: 19px; color: #b7472a; font-size: 15px; line-height: 15px; }
.thumb { width: 238px; height: 138px; box-sizing: border-box; border: 3px solid #b7472a; background: #fff; }
.thumb svg { display: block; }
.editor { flex: 1; display: grid; grid-template-columns: 13px 1361px; column-gap: 120px; grid-template-rows: 13px 766px; row-gap: 28px; padding: 5px 0 0 8px; margin-bottom: 2px; border-bottom: 1px solid #c8c8c8; align-content: start; }
.hruler { grid-column: 2; grid-row: 1; margin-left: 4px; background: #fff; height: 13px; width: 1357px; }
.hruler svg, .vruler svg { display: block; }
.vruler { grid-column: 1; grid-row: 2; margin-top: 2px; height: 764px; background: #fff; overflow: hidden; }
.slide { grid-column: 2; grid-row: 2; position: relative; background: #fff; box-shadow: inset 0 0 0 1px #c9c9c9; }
.chart { position: absolute; left: 227px; top: 81px; overflow: visible; }
.ct { font-family: Lato, "Open Sans", sans-serif; font-size: 16px; fill: #595959; }
.chart-btns { position: absolute; left: 1148px; top: 81px; display: flex; flex-direction: column; gap: 10px; }
.cbtn { width: 28px; height: 28px; box-sizing: border-box; background: #fff; border: 1.5px solid #a8a8a8; display: flex; align-items: center; justify-content: center; }

/* status bar */
.statusbar { flex: none; height: 18px; background: #f1f1f1; display: flex; align-items: center; font-size: 11px; color: #444; border-top: 1px solid #d4d4d4; box-sizing: border-box; }
.st-slide { margin-left: 7px; width: 62px; }
.st-spell { margin-left: 15px; }
.st-lang { margin-left: 19px; }
.st-right { margin-left: auto; display: flex; align-items: center; height: 100%; }
.st-t1 { margin-left: 5px; width: 50px; }
.st-com { margin-right: 3px; }
.st-t2 { width: 73px; }
.st-view { width: 40px; height: 100%; display: flex; align-items: center; justify-content: center; }
.st-view.on { background: #c6c6c6; }
.zoom-minus { width: 8px; height: 1px; background: #555; margin-left: 6px; }
.zoom-track { position: relative; width: 100px; height: 1px; background: #a8a8a8; margin-left: 5px; display: block; }
.zoom-track i { position: absolute; left: 50px; top: -5px; width: 5px; height: 11px; background: #6a6a6a; }
.zoom-plus { position: relative; width: 9px; height: 1px; background: #555; margin-left: 5px; }
.zoom-plus::after { content: ""; position: absolute; left: 4px; top: -4px; width: 1px; height: 9px; background: #555; }
.st-zoom { margin-left: 13px; width: 30px; }
.st-fit { margin: 0 7px 0 9px; }

/* excel window */
.sheet-win { position: absolute; left: 833px; top: 165px; width: 676px; height: 220px; box-sizing: border-box; background: #f1f1f1; border: 1px solid #217346; box-shadow: 0 2px 8px rgba(0, 0, 0, .45); font-family: Lato, "Open Sans", sans-serif; z-index: 5; display: flex; flex-direction: column; }
.sw-head { flex: none; height: 65px; background: #217346; color: #fff; display: flex; align-items: flex-start; padding-top: 8px; box-sizing: border-box; font-family: "Open Sans", sans-serif; font-size: 11.5px; }
.sw-save { margin-left: 21px; }
.sw-undo { margin-left: 15px; }
.sw-c { margin: 6px 0 0 4px; border-top-color: #5f9c7b; }
.sw-redo { margin-left: 11px; }
.sw-table { margin-left: 10px; }
.sw-title { margin-left: 115px; line-height: 15px; }
.sw-close { margin-left: auto; margin-right: 18px; margin-top: 2px; }
.sw-body { display: flex; flex: none; }
.sheet { position: relative; display: grid; grid-template-columns: 26px 77px 70px 70px 70px 64px 64px 64px 64px 64px 19px; grid-template-rows: 19px 20px 20px 20px 20px 20px 7px; width: 652px; font-size: 14px; color: #222; border-right: 1px solid #8c8c8c; border-bottom: 1px solid #8c8c8c; }
.corner { background: #e6e6e6; position: relative; }
.corner i { position: absolute; right: 3px; bottom: 3px; width: 0; height: 0; border-left: 11px solid transparent; border-bottom: 11px solid #b4b4b4; }
.chead { background: #e6e6e6; border-right: 1px solid #bdbdbd; border-bottom: 1px solid #8c8c8c; box-sizing: border-box; text-align: center; line-height: 18px; font-size: 13px; color: #444; }
.chead.hi { background: #c9c9c9; border-bottom-color: #217346; }
.chead.rest { border-right: 0; }
.rhead { background: #e6e6e6; border-bottom: 1px solid #bdbdbd; border-right: 1px solid #8c8c8c; box-sizing: border-box; text-align: center; line-height: 19px; font-size: 13px; color: #444; }
.rhead.hi { background: #cfcfcf; color: #217346; }
.scell { background: #fff; border-right: 1px solid #d4d4d4; border-bottom: 1px solid #d4d4d4; box-sizing: border-box; padding: 0 2px; line-height: 19px; white-space: nowrap; overflow: hidden; }
.scell.pink { background: #faeaea; }
.scell.lav { background: #f1edf7; }
.scell.blue { background: #e7eef8; }
.scell.num { text-align: right; }
.rng { position: absolute; box-sizing: border-box; pointer-events: none; }
.rng.purple { left: 26px; top: 38px; width: 78px; height: 81px; border: 2px solid #7e57b8; border-left: 0; }
.rng.green { left: 103px; top: 18px; width: 71px; height: 22px; border: 2px solid #217346; }
.rng.red { left: 173px; top: 37px; width: 141px; height: 3px; border-bottom: 2px solid #c0313c; }
.rng.red::after { content: ""; position: absolute; right: 0; top: -19px; width: 2px; height: 20px; background: #c0313c; }
.rng.blue { left: 103px; top: 39px; width: 211px; height: 81px; border-right: 2px solid #2f6ec7; border-bottom: 2px solid #2f6ec7; }
.active-a1 { position: absolute; left: 26px; top: 19px; width: 2px; height: 20px; background: #217346; }
.dot { position: absolute; width: 5px; height: 5px; box-shadow: 0 0 0 1px #fff; }
.d-a-top { left: 24px; top: 37px; background: #7e57b8; }
.d-b-top { left: 101px; top: 37px; background: #7e57b8; }
.d-c-top { left: 171px; top: 37px; background: #217346; }
.d-d-top { left: 311px; top: 37px; background: #c0313c; }
.d-a-bot { left: 24px; top: 117px; background: #7e57b8; }
.d-b-bot { left: 101px; top: 117px; background: #7e57b8; }
.d-d-bot { left: 311px; top: 117px; background: #2f6ec7; }
.vscroll { display: flex; flex-direction: column; width: 15px; margin: 2px 0 0 4px; height: 121px; }
.vthumb { height: 22px; background: #fff; border: 1px solid #bdbdbd; box-sizing: border-box; }
.vtrack { flex: 1; background: #dcdcdc; }
.sb-btn { flex: none; width: 15px; height: 14px; box-sizing: border-box; background: #f6f6f6; border: 1px solid #bdbdbd; display: flex; align-items: center; justify-content: center; }
.tri { width: 0; height: 0; border: 3.5px solid transparent; }
.tri.up { border-top: 0; border-bottom: 5px solid #666; }
.tri.down { border-bottom: 0; border-top: 5px solid #666; }
.tri.left { border-left: 0; border-right: 4px solid #666; }
.tri.right { border-right: 0; border-left: 4px solid #666; }
.hscroll { display: flex; height: 14px; margin: 5px 0 0 3px; width: 649px; }
.hthumb { width: 551px; background: #fff; border: 1px solid #bdbdbd; box-sizing: border-box; }
.htrack { flex: 1; background: #dcdcdc; }

/* site watermark laid over the ribbon */
.watermark { position: absolute; left: 638px; top: 45px; z-index: 8; pointer-events: none; }
.wm-text { display: flex; align-items: baseline; font-family: "Liberation Serif", serif; font-style: italic; font-weight: 700; line-height: 108px; height: 108px; white-space: nowrap; }
/* wide padding keeps the clipped gradient from cutting the glyphs */
.wm-text span { display: block; flex: none; padding: 0 50px 30px 10px; margin: 0 -50px -30px -10px; transform-origin: 10px 50%; background-clip: text; -webkit-background-clip: text; color: transparent; filter: drop-shadow(3px 3px 3px rgba(40, 50, 20, .45)); }
.wm-text .w-b { font-size: 118px; width: 48px; transform: translateY(8px) scaleX(.55); background-image: linear-gradient(#c4d6a0, #f0f4e6); filter: none; opacity: .8; }
.wm-text .w-u { font-size: 70px; width: 102px; letter-spacing: -2px; transform: scaleX(.85); background-image: linear-gradient(#3f7a1e, #9ab17a); opacity: .85; }
.wm-text .w-a { font-size: 68px; width: 70px; letter-spacing: -2px; background-image: linear-gradient(#5e8a3a, #33541a); opacity: .8; }
.wm-text .w-d { font-size: 60px; width: 6px; transform: translateY(24px); background-image: linear-gradient(#2c5410, #2c5410); }
.wm-text .w-m { font-size: 120px; width: 78px; transform: translateY(25px) scaleX(.7); background-image: linear-gradient(rgba(255, 255, 255, .35) 15%, #6f9a45 42%, #2f5d12 70%); }
.wm-text .w-e { font-size: 100px; width: 40px; transform: translateY(24px) scaleX(.85); background-image: linear-gradient(#2f6a12, #a6bc82); }
.wm-sub { margin: -3px 0 0 20px; color: #f6f6f6; font-size: 12px; font-weight: 700; text-shadow: 0 0 2px #d8d8d8; font-family: "Liberation Serif", serif; }
</style>
